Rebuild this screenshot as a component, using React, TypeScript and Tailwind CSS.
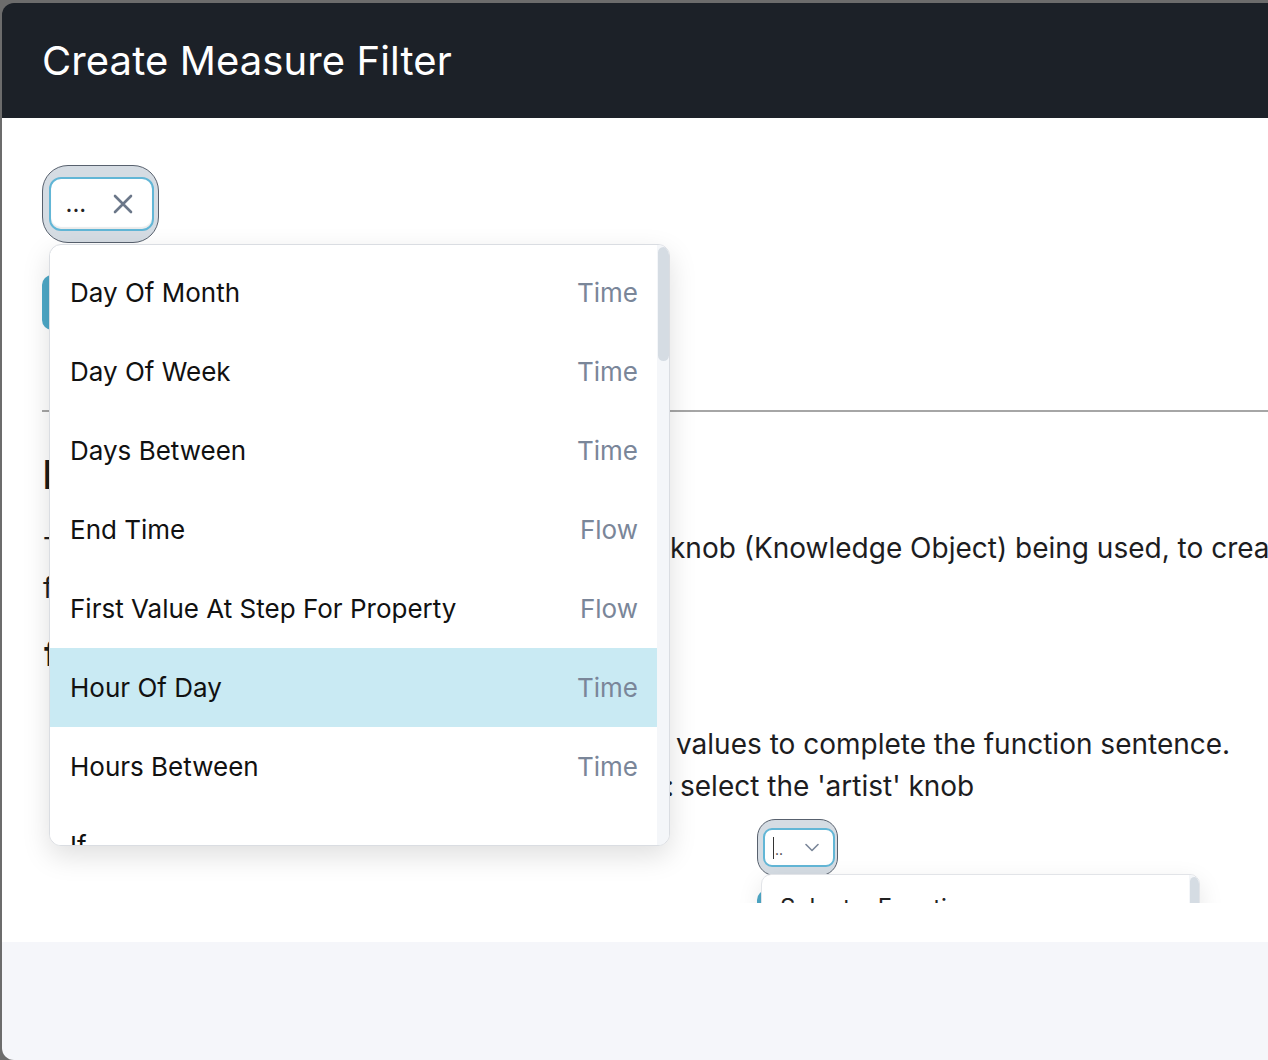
import React from "react";

const items: { name: string; kind: string; active?: boolean }[] = [
  { name: "Day Of Month", kind: "Time" },
  { name: "Day Of Week", kind: "Time" },
  { name: "Days Between", kind: "Time" },
  { name: "End Time", kind: "Flow" },
  { name: "First Value At Step For Property", kind: "Flow" },
  { name: "Hour Of Day", kind: "Time", active: true },
  { name: "Hours Between", kind: "Time" },
  { name: "If", kind: "" },
  { name: "Is Empty", kind: "" },
];

export default function App() {
  return (
    <div className="w-[1268px] h-[1060px] overflow-hidden bg-[#6c6c6c] font-[Inter,sans-serif]">
      <div className="ml-[2px] mt-[3px] w-[1400px] rounded-tl-[12px] rounded-bl-[12px] overflow-hidden">
        {/* Header */}
        <div className="h-[115px] bg-[#1c2128] flex items-center pl-[40px]">
          <h1 className="text-[40px] leading-none text-white font-normal tracking-[0.1px]">Create Measure Filter</h1>
        </div>

        {/* Body */}
        <div className="bg-white h-[824px]">
          <div className="h-[785px] overflow-hidden pl-[40px] pt-[47px] text-[#1d1d1f]">
            {/* Select 1 */}
            <div className="relative z-20 w-[117px] h-[78px]">
              <div className="w-[117px] h-[78px] rounded-[26px] bg-[#d5dce3] border-[1.5px] border-[#58616e] flex items-center pl-[5.5px]">
                <div className="w-[105px] h-[54px] rounded-[12px] border-2 border-[#62b6d6] bg-white shadow-[inset_0_-2px_1px_rgba(0,0,0,0.08)] flex items-center pl-[15px] pr-[19px] justify-between">
                  <span className="text-[24px] leading-none text-[#222]">...</span>
                  <svg width="20" height="20" viewBox="0 0 20 20" className="text-[#6b7789]">
                    <path d="M2 2 L18 18 M18 2 L2 18" stroke="currentColor" strokeWidth="2.6" strokeLinecap="round" fill="none" />
                  </svg>
                </div>
              </div>

              {/* Dropdown 1 */}
              <div className="absolute left-[7px] top-[79px] w-[621px] h-[602px] rounded-[12px] border border-[#dadde2] bg-white shadow-[0_10px_28px_rgba(0,0,0,0.13)] overflow-hidden">
                <div className="pt-[8px] pr-[12px]">
                  {items.map((it) => (
                    <div
                      key={it.name}
                      className={`h-[79px] flex items-center justify-between pl-[20px] pr-[19px] text-[26px] ${it.active ? "bg-[#c9eaf3]" : "bg-white"}`}
                    >
                      <span className="text-[#111]">{it.name}</span>
                      <span className="text-[#7a8699]">{it.kind}</span>
                    </div>
                  ))}
                </div>
                <div className="absolute right-0 top-0 bottom-0 w-[12px] bg-[#f4f6f9]">
                  <div className="mt-[2px] h-[114px] w-[11px] ml-[1px] rounded-full bg-[#d5dce3]" />
                </div>
              </div>
            </div>

            {/* Add button (behind dropdown) */}
            <button className="mt-[32px] w-[160px] h-[55px] rounded-[10px] bg-[#4ea9c8] text-white text-[22px] block">Add Function</button>

            <div className="mt-[80px] h-[2px] bg-[#a6a6a6]" />

            <h2 className="mt-[38px] text-[40px] leading-[50px] font-extrabold text-[#1a1a1a] pl-[1px]">Instructions</h2>

            <div className="mt-[28px] text-[28px] leading-[40px] pl-[1px] text-[#1d1d1f]">
              <div className="flex whitespace-nowrap">
                <span className="w-[627px] shrink-0 overflow-hidden">The filter is built from a function and the</span>
                <span>knob (Knowledge Object) being used, to create a new</span>
              </div>
              <div className="whitespace-nowrap">filter on the measure.</div>
            </div>

            <h3 className="mt-[24px] text-[34px] leading-[44px] font-bold text-[#1a1a1a] pl-[2px]">function</h3>

            <div className="mt-[47px] text-[28px] leading-[42px] pl-[12px] text-[#1d1d1f]">
              <div className="flex whitespace-nowrap">
                <span className="w-[622px] shrink-0 overflow-hidden">Choose a function, then pick the knobs and</span>
                <span>values to complete the function sentence.</span>
              </div>
              <div className="flex whitespace-nowrap">
                <span className="w-[620px] shrink-0 overflow-hidden text-right">For example:</span>
                <span className="ml-[6px]">select the 'artist' knob</span>
              </div>
            </div>

            {/* Select 2 */}
            <div className="relative z-20 ml-[715px] mt-[12px] w-[81px] h-[57px]">
              <div className="w-[81px] h-[57px] rounded-[18px] bg-[#d5dce3] border-[1.5px] border-[#58616e] flex items-center pl-[4.5px]">
                <div className="w-[72px] h-[39px] rounded-[9px] border-2 border-[#62b6d6] bg-white flex items-center pl-[8px] pr-[14px] justify-between">
                  <span className="flex items-end h-[22px]">
                    <span className="w-[1.5px] h-[22px] bg-[#333]" />
                    <span className="text-[14px] leading-none text-[#333] ml-[1px] mb-[2px]">..</span>
                  </span>
                  <svg width="14" height="9" viewBox="0 0 14 9" className="text-[#7a8699]">
                    <path d="M1 1.5 L7 7.5 L13 1.5" stroke="currentColor" strokeWidth="1.6" fill="none" strokeLinecap="round" strokeLinejoin="round" />
                  </svg>
                </div>
              </div>
              <div className="absolute left-[4px] top-[55px] w-[439px] h-[400px] rounded-[10px] border border-[#e2e4e8] bg-white shadow-[0_8px_24px_rgba(0,0,0,0.10)] overflow-hidden">
                <div className="pr-[12px]">
                  <div className="h-[66px] flex items-center pl-[18px] text-[24px] text-[#222]">Select a Function</div>
                </div>
                <div className="absolute right-0 top-0 bottom-0 w-[10px] bg-[#f4f6f9]">
                  <div className="mt-[2px] h-[90px] w-[9px] ml-[1px] rounded-full bg-[#d5dce3]" />
                </div>
              </div>
            </div>
            <button className="relative z-10 ml-[715px] mt-[14px] w-[120px] h-[50px] rounded-[10px] bg-[#4ea9c8] block" />
          </div>
        </div>

        {/* Footer */}
        <div className="h-[118px] bg-[#f5f6fa]" />
      </div>
    </div>
  );
}
